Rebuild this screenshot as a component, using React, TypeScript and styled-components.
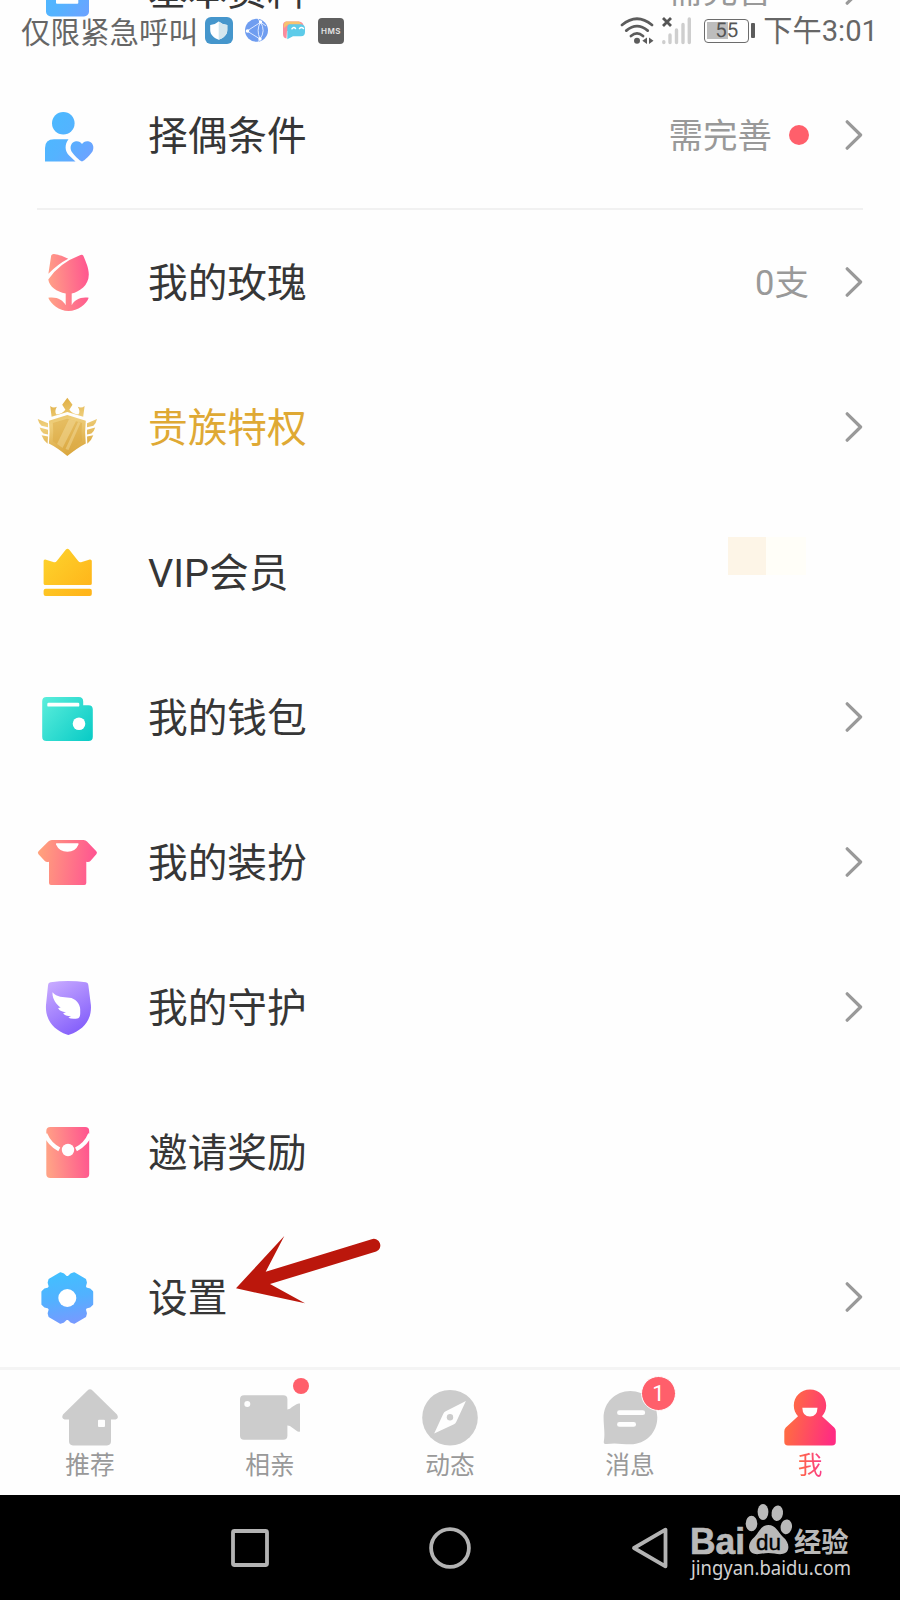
import React from "react";
import styled, { createGlobalStyle, css } from "styled-components";

const GlobalStyle = createGlobalStyle`
  * { box-sizing: border-box; }
  body {
    margin: 0;
    background: #fefefe;
    font-family: Roboto, "Noto Sans CJK SC", sans-serif;
  }
  svg { display: block; }
`;

const Screen = styled.div`
  position: relative;
  width: 900px;
  height: 1600px;
  display: flex;
  flex-direction: column;
  overflow: hidden;
  background: #fefefe;
`;

const StatusBar = styled.header`
  position: absolute;
  inset: 0 0 auto 0;
  height: 62px;
  padding: 0 22px 0 21px;
  display: flex;
  align-items: center;
  justify-content: space-between;
  color: #666;
`;

const StatusGroup = styled.div`
  display: flex;
  align-items: center;
`;

const Carrier = styled.span`
  width: 184px;
  margin-top: -2px;
  font-size: 29.5px;
  line-height: 60px;
  font-family: "Noto Sans CJK SC", sans-serif;
  white-space: nowrap;
`;

const Clock = styled.span`
  font-size: 29.2px;
  line-height: 62px;
  margin-left: 14px;
  white-space: nowrap;
`;

const Hms = styled.span`
  width: 26px;
  height: 26px;
  margin-left: 12px;
  border-radius: 4px;
  background: #5f5f5f;
  color: #e4e4e4;
  font: 600 8px/26px Inter, sans-serif;
  letter-spacing: 0.5px;
  text-align: center;
`;

const Battery = styled.div`
  position: relative;
  width: 45px;
  height: 24px;
  margin-left: 12px;
  border: 1.5px solid #6c6c6c;
  border-radius: 4px;
  background: linear-gradient(#bdbdbd, #bdbdbd) 2px 2px / 21px 17px no-repeat;
  font-size: 20.5px;
  line-height: 22px;
  text-align: center;
  text-rendering: geometricPrecision;
  color: #555;
  &::after {
    content: "";
    position: absolute;
    right: -7px;
    top: 3px;
    width: 4px;
    height: 15px;
    border-radius: 1px;
    background: #5c5c5c;
  }
`;

const List = styled.main`
  flex: 0 0 1367px;
  overflow: hidden;
  padding: 0 37px;
  display: flex;
  flex-direction: column;
`;

const Row = styled.div<{ $first?: boolean }>`
  flex: 0 0 145px;
  margin-top: ${(p) => (p.$first ? "-82.5px" : "0")};
  display: flex;
  align-items: center;
`;

const RowIcon = styled.svg`
  flex: none;
  width: 60px;
  height: 60px;
  margin-right: 51px;
  overflow: visible;
`;

const Label = styled.span<{ $gold?: boolean }>`
  flex: 1;
  padding-top: 4px;
  font-size: 39.7px;
  line-height: 58px;
  color: ${(p) => (p.$gold ? "#dfa934" : "#363636")};
  white-space: nowrap;
`;

const Value = styled.span`
  padding-top: 2px;
  font-size: 34.5px;
  line-height: 50px;
  color: #999;
  white-space: nowrap;
`;

const Dot = styled.i`
  width: 20px;
  height: 20px;
  margin-left: 17px;
  border-radius: 50%;
  background: #ff5f6b;
`;

const Chevron = styled.svg`
  width: 18px;
  height: 32px;
  margin-left: 36px;
  fill: none;
  stroke: #999;
  stroke-width: 3.2;
  stroke-linecap: round;
  stroke-linejoin: round;
`;

const Smudge = styled.span`
  width: 78px;
  height: 38px;
  margin: 0 57px 32px 0;
  background: linear-gradient(90deg, #fdf5e7 38.5px, #fffef8 38.5px);
`;

const Divider = styled.div`
  flex: 0 0 2px;
  background: #f1f1f1;
`;

const TabBar = styled.nav`
  flex: 0 0 128px;
  display: flex;
  border-top: 3px solid #f4f4f4;
  background: #fefefe;
`;

const Tab = styled.div`
  flex: 1;
  padding-top: 17px;
  display: flex;
  flex-direction: column;
  align-items: center;
`;

const TabIcon = styled.div`
  position: relative;
  width: 68px;
  height: 60px;
  margin-bottom: 1px;
  svg { width: 68px; height: 60px; fill: #ccc; overflow: visible; }
`;

const TabLabel = styled.span<{ $active?: boolean }>`
  font-size: 24.7px;
  line-height: 36px;
  color: #999;
  ${(p) =>
    p.$active &&
    css`
      background: linear-gradient(90deg, #ff6c42, #fb3a88);
      -webkit-background-clip: text;
      background-clip: text;
      color: transparent;
    `}
`;

const TabDot = styled.i`
  position: absolute;
  left: 57px;
  top: -9px;
  width: 16px;
  height: 16px;
  border-radius: 50%;
  background: #ff5f6b;
`;

const TabBadge = styled.b`
  position: absolute;
  left: 45px;
  top: -11px;
  width: 35px;
  height: 35px;
  border: 1.5px solid #fefefe;
  border-radius: 50%;
  background: #ff5f6b;
  color: #fff;
  font-weight: 400;
  font-size: 22px;
  line-height: 33px;
  text-align: center;
`;

const SystemBar = styled.footer`
  flex: 0 0 105px;
  display: flex;
  align-items: center;
  gap: 156px;
  padding-left: 228px;
  background: #000;
`;

const SystemKey = styled.svg`
  flex: none;
  width: 44px;
  height: 44px;
  fill: none;
  stroke: #b3b3b3;
  stroke-width: 3.8;
  stroke-linejoin: round;
`;

const Watermark = styled.svg`
  position: absolute;
  left: 688px;
  top: 1500px;
  width: 170px;
  height: 88px;
`;

const Pointer = styled.svg`
  position: absolute;
  left: 236px;
  top: 1230px;
  width: 150px;
  height: 80px;
  fill: #bb170c;
`;

const gearPath = (() => {
  const pts: string[] = [];
  for (let i = 0; i < 6; i++) {
    [[-26.5, 20.8], [-20, 24], [-14, 25.4], [14, 25.4], [20, 24], [26.5, 20.8]].forEach(([d, r]) => {
      const a = ((i * 60 + d) * Math.PI) / 180;
      pts.push(`${(30.3 + r * Math.cos(a)).toFixed(2)} ${(31 + r * Math.sin(a)).toFixed(2)}`);
    });
  }
  return `M${pts.join("L")}Z`;
})();

const GradientDefs = styled.svg`
  position: absolute;
`;

const Gradients = () => (
  <GradientDefs width="0" height="0">
    <defs>
      <linearGradient id="blue" gradientUnits="userSpaceOnUse" x1="8" y1="20" x2="56" y2="54">
        <stop stopColor="#4cb9ff" /><stop offset=".45" stopColor="#54b3ff" /><stop offset="1" stopColor="#70a0ff" />
      </linearGradient>
      <linearGradient id="blueDown" gradientUnits="userSpaceOnUse" x1="25" y1="5" x2="34" y2="57">
        <stop stopColor="#41c0ff" /><stop offset=".5" stopColor="#52b1ff" /><stop offset="1" stopColor="#7899ff" />
      </linearGradient>
      <linearGradient id="rose" gradientUnits="userSpaceOnUse" x1="10" y1="30" x2="52" y2="26">
        <stop stopColor="#ffa286" /><stop offset="1" stopColor="#ff568f" />
      </linearGradient>
      <linearGradient id="shirt" gradientUnits="userSpaceOnUse" x1="2" y1="24" x2="60" y2="30">
        <stop stopColor="#ffa17c" /><stop offset="1" stopColor="#ff5292" />
      </linearGradient>
      <linearGradient id="gold" gradientUnits="userSpaceOnUse" x1="20" y1="2" x2="34" y2="59">
        <stop stopColor="#dfad42" /><stop offset=".4" stopColor="#efcf7c" /><stop offset="1" stopColor="#d9a43a" />
      </linearGradient>
      <linearGradient id="yellow" gradientUnits="userSpaceOnUse" x1="8" y1="12" x2="50" y2="50">
        <stop stopColor="#fdd22c" /><stop offset="1" stopColor="#ffb51a" />
      </linearGradient>
      <linearGradient id="teal" gradientUnits="userSpaceOnUse" x1="6" y1="12" x2="54" y2="54">
        <stop stopColor="#59eddb" /><stop offset="1" stopColor="#09cbc6" />
      </linearGradient>
      <linearGradient id="purple" gradientUnits="userSpaceOnUse" x1="12" y1="8" x2="42" y2="54">
        <stop stopColor="#c6a8ff" /><stop offset="1" stopColor="#8560fb" />
      </linearGradient>
      <linearGradient id="me" gradientUnits="userSpaceOnUse" x1="9" y1="26" x2="59" y2="36">
        <stop stopColor="#ff703e" /><stop offset="1" stopColor="#ff2c82" />
      </linearGradient>
    </defs>
  </GradientDefs>
);

const icons: Record<string, React.ReactNode> = {
  profile: (
    <>
      <rect x="9" y="4" width="43" height="52.5" rx="5" fill="url(#blue)" />
      <rect x="19" y="39" width="22.3" height="4.8" rx="1" fill="#fff" />
    </>
  ),
  partner: (
    <g fill="url(#blue)">
      <circle cx="26.3" cy="18.2" r="11.3" />
      <path d="M8 56.5V43Q8 34.2 17 34.2H31.5C27.5 39 27.6 46.5 32.4 50.8L38.5 56.5Z" />
      <path d="M45 56.5C43 56.2 35.5 48.5 34.4 46.2C32.4 42 34.3 37 38.8 36.3C41.5 35.9 43.8 37.1 45 39.1C46.2 37.1 48.5 35.9 51.2 36.3C55.7 37 57.6 42 55.6 46.2C54.5 48.5 47 56.2 45 56.5Z" />
    </g>
  ),
  rose: (
    <g fill="url(#rose)">
      <path d="M11.4 21.8L14.2 3.6Q14.8 1.8 17 2Q25 3.3 31.2 6.8Q21 12 11.4 21.8Z" />
      <path d="M11.3 27.5Q22 11 43.5 2.9Q46.2 2.1 46.8 4.8C48.8 10 51.8 16 51.8 22.5C51.8 33.5 42.5 39.7 34.7 41.6V53.2C37.5 48 43 44.6 51.7 45.7C49.5 52 41 59 31.5 59C22 59 14 52.3 11.3 45.8C20 44.5 26 48.2 28.7 53.2V41.6C19.5 39.6 12.5 35 11.3 27.5Z" />
    </g>
  ),
  noble: (
    <g fill="url(#gold)">
      <path d="M30.3 .8L35.5 7.7L32.3 12.7Q36 17.2 41.3 17.4Q43.8 14.8 40.8 9.8Q44.6 11.6 47.6 9L46.2 19.8L30.3 15L14.6 19.8L13.2 9Q16.2 11.6 19.9 9.8Q17 14.8 19.5 17.4Q24.8 17.2 28.4 12.7L25.2 7.7Z" />
      <path d="M30.3 18.1L48.8 23.8Q47.5 34 48.8 46.5Q41 50.5 30.3 59Q20 50.5 11.9 46.5Q13.2 34 11.9 23.8Z" />
      <path d="M30.3 21.7L45 26Q44 35 45 44.3L30.3 54.6L15.8 44.3Q16.8 35 15.8 26Z" fill="#dca943" fillOpacity=".5" />
      <path d="M32 22.2L39 24.3L25.5 51L20 47ZM41 25L43.6 25.8L31.5 53L28.5 52Z" fill="#f8e3a9" fillOpacity=".4" />
      <path d="M.7 22L11 26.2V30.3L4.5 28.8Q1.7 26.3 .7 22ZM2.6 30.4L11 32.7V37.5L6.5 36.5Q3.6 34.2 2.6 30.4ZM4.6 38.2L11 39.5L10.6 46.7Q6.2 43.2 4.6 38.2Z" />
      <path d="M60 22L50 26.2V30.3L56.4 28.8Q59.2 26.3 60 22ZM58.2 30.4L50 32.7V37.5L54.4 36.5Q57.2 34.2 58.2 30.4ZM56.3 38.2L50 39.5L50.3 46.7Q54.7 43.2 56.3 38.2Z" />
    </g>
  ),
  vip: (
    <g fill="url(#yellow)">
      <path d="M8.3 17.5L17 20.3Q18.7 20.6 19.8 19L28.7 7.7Q30.5 5.7 32.3 7.7L41.2 19Q42.3 20.6 44 20.3L52.8 17.5Q54.8 17.3 54.8 19V41.4Q54.8 43 53 43H8.3Q6.6 43 6.6 41.4V19Q6.6 17.3 8.3 17.5Z" />
      <rect x="6.6" y="46.7" width="48.2" height="7.3" rx="2" />
    </g>
  ),
  wallet: (
    <>
      <path d="M9.5 10H41.8Q46.2 10 46.2 14.5V18.3H51.5Q55.8 18.3 55.8 22.6V49.7Q55.8 54 51.5 54H9.5Q5.2 54 5.2 49.7V14.3Q5.2 10 9.5 10Z" fill="url(#teal)" />
      <rect x="10.3" y="15.8" width="32" height="3.8" rx="1.2" fill="#fff" />
      <circle cx="42" cy="36.7" r="6.3" fill="#fff" />
    </>
  ),
  outfit: (
    <>
      <path d="M14.8 8H46.5Q48.7 8 50 9.5L59.3 19.2Q60.7 20.7 59.3 22.2L53.4 29Q52 30.6 49.3 29.8V51Q49.3 53 47.3 53H14Q12 53 12 51V29.8Q9.3 30.6 7.8 29L1.5 22.2Q.2 20.7 1.5 19.2L11.3 9.5Q12.8 8 14.8 8Z" fill="url(#shirt)" />
      <path d="M19.8 11.3H40.7Q42 11.3 41.5 12.4Q38.5 19.7 30.4 19.7Q22.3 19.7 19 12.4Q18.5 11.3 19.8 11.3Z" fill="#fff" />
    </>
  ),
  guard: (
    <>
      <path d="M13.6 5.2Q31 2.6 48.8 5.2Q51.1 5.5 51.3 7.7L53.9 28C55 43 46 53 32.8 57.6Q31.3 58.2 29.8 57.6C17 53 8 43 9 28L11.1 7.7Q11.3 5.5 13.6 5.2Z" fill="url(#purple)" />
      <path d="M15.5 15.3C20 20.3 26 20.3 32.5 20.7C38 21 43.4 27 43.2 32.5C43.2 36.5 43.6 40 41.3 41.2C37 42.2 34 41.8 31.3 40.8L34 39.2C30.5 39.2 27 38.2 26.2 36L29 35.4C25 34.6 21.6 33.5 21.2 31.1L23.7 30.5C19.5 28 15 22 15.5 15.3Z" fill="#fff" />
    </>
  ),
  invite: (
    <>
      <rect x="9.3" y="5" width="42.9" height="51" rx="4" fill="url(#rose)" />
      <path d="M8.2 12Q12.5 22.3 22.3 27.3M53.2 12Q49 22.3 39 27.3" fill="none" stroke="#fefefe" strokeWidth="4.2" />
      <circle cx="31" cy="28" r="6.2" fill="#fefefe" />
    </>
  ),
  settings: (
    <>
      <path d={gearPath} fill="url(#blueDown)" stroke="url(#blueDown)" strokeWidth="2.5" strokeLinejoin="round" />
      <circle cx="30.3" cy="31" r="9" fill="#fff" />
    </>
  ),
};

const rows = [
  { icon: "profile", label: "基本资料", value: "需完善", dot: true, arrow: true },
  { icon: "partner", label: "择偶条件", value: "需完善", dot: true, arrow: true, line: true },
  { icon: "rose", label: "我的玫瑰", value: "0支", arrow: true },
  { icon: "noble", label: "贵族特权", gold: true, arrow: true },
  { icon: "vip", label: "VIP会员", smudge: true },
  { icon: "wallet", label: "我的钱包", arrow: true },
  { icon: "outfit", label: "我的装扮", arrow: true },
  { icon: "guard", label: "我的守护", arrow: true },
  { icon: "invite", label: "邀请奖励" },
  { icon: "settings", label: "设置", arrow: true },
];

const tabs = [
  {
    label: "推荐",
    art: (
      <path fillRule="evenodd" d="M31.5 3.5Q34 1.2 36.5 3.5L61 27.5Q63.3 31.5 59.5 32.5H55V54.3Q55 58.4 51 58.4H17Q13 58.4 13 54.3V32.5H8.7Q4.9 31.5 7 27.5ZM43 32.7Q42 32.7 42 33.7V39Q42 40 43 40H48Q49 40 49 39V33.7Q49 32.7 48 32.7Z" />
    ),
  },
  {
    label: "相亲",
    dot: true,
    art: (
      <path fillRule="evenodd" d="M8 8.3H47.3Q51.4 8.3 51.4 12.3V22.4Q54.2 22.2 56 20L60.5 17.3Q62.5 16 64 16.6V44.4Q62.5 45.2 60.5 43.8L56 40.6Q54 38.5 51.4 38.6V48.7Q51.4 52.7 47.3 52.7H8Q4 52.7 4 48.7V12.3Q4 8.3 8 8.3ZM11.3 14A3 3 0 1 0 11.3 20A3 3 0 1 0 11.3 14Z" />
    ),
  },
  {
    label: "动态",
    art: (
      <>
        <circle cx="34" cy="30.7" r="27.8" />
        <path d="M49.9 14L40.3 34.7Q39.6 36.5 38 37.3L18.2 46.5L27.3 26.8Q28 25 29.7 24.2Z" fill="#fefefe" />
        <circle cx="34" cy="30.3" r="3.2" />
      </>
    ),
  },
  {
    label: "消息",
    badge: "1",
    art: (
      <>
        <path d="M34.3 4C49 4 61.3 15.5 61.3 30.5C61.3 45.5 50 57.3 34.5 57.3C25 57.3 20 55.5 10.5 57.1Q7.4 57.3 7.8 54.5C9.3 47 7.6 39 7.6 31C7.6 15.5 19.5 4 34.3 4Z" />
        <path d="M23.4 25.7H46.8M23.4 37.4H37.7" stroke="#fefefe" strokeWidth="4.7" strokeLinecap="round" />
      </>
    ),
  },
  {
    label: "我",
    active: true,
    art: (
      <>
        <path fill="url(#me)" d="M34 2.5C43.2 2.5 50.2 9.5 50.2 18.5C50.2 23 48.5 26.6 46 29.3L58.2 40.5Q59.8 42 59.8 44.3V54.8Q59.8 58.6 56 58.6H12Q8.3 58.6 8.3 54.8V44.3Q8.3 42 9.8 40.5L22 29.3C19.5 26.6 17.8 23 17.8 18.5C17.8 9.5 24.8 2.5 34 2.5Z" />
        <path d="M26.3 20.7H41.5Q41.2 29.5 34 29.6Q26.6 29.5 26.3 20.7Z" fill="#fefefe" />
      </>
    ),
  },
];

const StatusLeft = () => (
  <StatusGroup>
    <Carrier>仅限紧急呼叫</Carrier>
    <svg width="101" height="28" viewBox="205 17 101 28">
      <rect x="205" y="17" width="28" height="27" rx="6" fill="#4596cc" />
      <path d="M218.7 21.5Q222 24.5 227.3 25V30C227.3 35 223.5 38 218.7 39.7C214 38 210.2 35 210.2 30V25Q215.5 24.5 218.7 21.5Z" fill="#fff" />
      <path d="M218.7 21.5Q222 24.5 227.3 25V30C227.3 35 223.5 38 218.7 39.7Z" fill="#d3e6ee" />
      <circle cx="256.5" cy="30.3" r="11.5" fill="#6f9df0" />
      <path d="M247 31L261 22M247 31L260 39M260.5 22Q266 31 260 39M260.5 22Q256 30 260 39M260.5 22L266 26M260 39L258 42M260.5 22L258 19" fill="none" stroke="#dce8ff" strokeWidth="1" />
      <circle cx="247.5" cy="31" r="1.8" fill="#fff" /><circle cx="260.5" cy="22" r="1.7" fill="#fff" /><circle cx="260" cy="39" r="1.7" fill="#fff" />
      <path d="M286 21.5H299Q303.5 22 303.5 26V31H287L286.5 38.5Q283 38 283 34V25Q283 22 286 21.5Z" fill="#fb8c9d" />
      <path d="M286 21.5H299L302 24.5H288L284 28Q283 23 286 21.5Z" fill="#f6c36f" />
      <path d="M290 24.3H301Q305 24.6 305 28.5V32Q305 36.2 301 36.2H293L287.3 39.2V27.5Q287.5 24.6 290 24.3Z" fill="#5dcbe9" />
      <path d="M292 28.8Q293.8 26.5 295.5 28.5M299.5 28.5Q301.5 26.5 303.5 28.5" fill="none" stroke="#fff" strokeWidth="1.5" strokeLinecap="round" />
    </svg>
    <Hms>HMS</Hms>
  </StatusGroup>
);

const StatusRight = () => (
  <StatusGroup>
    <svg width="72" height="28" viewBox="619 16 72 28">
      <g fill="none" stroke="#5c5c5c" strokeWidth="2.7" strokeLinecap="round">
        <path d="M621 24Q636 11.5 651 24M625.3 29.6Q636 20.5 646.7 29.6M630 35Q636 29.8 642 35" />
      </g>
      <circle cx="636" cy="39.7" r="3" fill="#5c5c5c" />
      <path d="M646 36.5V43L641.3 39.7ZM648 36.5V43L652.5 39.7Z" fill="#5c5c5c" />
      <path d="M662 17L670 25M670 17L662 25" stroke="#555" strokeWidth="2.8" />
      <path d="M662.8 40.8V41.5M669 34V41.5M675.5 29V41.5M682 23.5V41.5M688.3 18V41.5" stroke="#cecece" strokeWidth="3.4" strokeLinecap="round" />
    </svg>
    <Battery>55</Battery>
    <Clock>下午3:01</Clock>
  </StatusGroup>
);

export default function App() {
  return (
    <Screen>
      <GlobalStyle />
      <Gradients />
      <List>
        {rows.map((r, i) => (
          <React.Fragment key={r.label}>
            <Row $first={i === 0}>
              <RowIcon viewBox="0 0 60 60">{icons[r.icon]}</RowIcon>
              <Label $gold={r.gold}>{r.label}</Label>
              {r.value && <Value>{r.value}</Value>}
              {r.dot && <Dot />}
              {r.smudge && <Smudge />}
              {r.arrow && (
                <Chevron viewBox="0 0 18 32">
                  <path d="M2.2 2.8L15.6 16L2.2 29.2" />
                </Chevron>
              )}
            </Row>
            {r.line && <Divider />}
          </React.Fragment>
        ))}
      </List>
      <TabBar>
        {tabs.map((t) => (
          <Tab key={t.label}>
            <TabIcon>
              <svg viewBox="0 0 68 60">{t.art}</svg>
              {t.dot && <TabDot />}
              {t.badge && <TabBadge>{t.badge}</TabBadge>}
            </TabIcon>
            <TabLabel $active={t.active}>{t.label}</TabLabel>
          </Tab>
        ))}
      </TabBar>
      <SystemBar>
        <SystemKey viewBox="0 0 44 44"><rect x="5" y="5" width="34" height="34" rx="1.5" /></SystemKey>
        <SystemKey viewBox="0 0 44 44"><circle cx="22" cy="22" r="18.9" /></SystemKey>
        <SystemKey viewBox="0 0 44 44"><path d="M6 22L37.5 3.7V40.3Z" /></SystemKey>
      </SystemBar>
      <StatusBar>
        <StatusLeft />
        <StatusRight />
      </StatusBar>
      <Pointer viewBox="0 0 150 80">
        <path d="M0 58.3L48.3 6L29.7 41.7L135.7 9.2A6.6 6.6 0 0 1 140.2 21.6L34 54L69 73.3Z" />
      </Pointer>
      <Watermark viewBox="688 1500 170 88" fill="#b9b9b9">
        <text x="690" y="1554" fontFamily="Liberation Sans, sans-serif" fontWeight="700" fontSize="36" stroke="#b9b9b9" strokeWidth=".7" textLength="55" lengthAdjust="spacingAndGlyphs">Bai</text>
        <ellipse cx="751.5" cy="1523.5" rx="5.8" ry="7.7" />
        <ellipse cx="763" cy="1512" rx="5.4" ry="8" />
        <ellipse cx="777.3" cy="1513.2" rx="5.7" ry="7.8" transform="rotate(8 777.3 1513.2)" />
        <ellipse cx="786.3" cy="1526.8" rx="5.7" ry="7.4" transform="rotate(8 786.3 1526.8)" />
        <path d="M768.3 1525C776 1525 778 1532 783 1537C789 1542 790 1549 786 1552.5C781 1556 775 1553 768.3 1553C762 1553 756 1556 751.5 1552.5C747 1548 749 1541.5 754.5 1537C759.5 1532 761 1525 768.3 1525Z" />
        <text x="756" y="1550" fontFamily="Liberation Sans, sans-serif" fontSize="22" fill="#000" stroke="#000" strokeWidth=".4" textLength="25" lengthAdjust="spacingAndGlyphs">du</text>
        <text x="794" y="1551.5" fontFamily="Noto Sans CJK SC, sans-serif" fontWeight="700" fontSize="27.5" textLength="54.5" lengthAdjust="spacingAndGlyphs">经验</text>
        <text x="691" y="1575" fontFamily="Noto Sans, sans-serif" fontSize="19.5" fill="#d2d2d2" textLength="160" lengthAdjust="spacingAndGlyphs">jingyan.baidu.com</text>
      </Watermark>
    </Screen>
  );
}
